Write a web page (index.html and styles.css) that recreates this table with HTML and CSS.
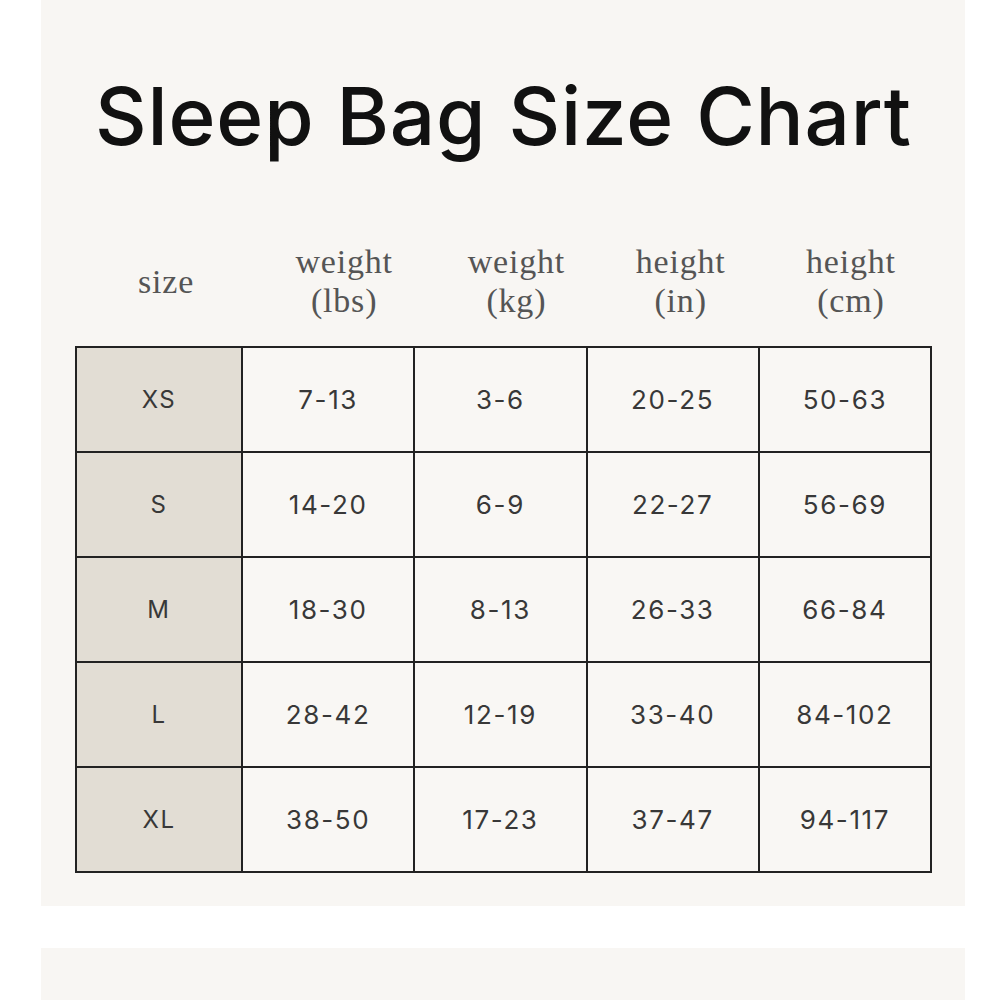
FILE: index.html
```html
<!DOCTYPE html>
<html lang="en">
<head>
<meta charset="utf-8">
<title>Sleep Bag Size Chart</title>
<link rel="stylesheet" href="styles.css">
</head>
<body>
<section class="panel">
  <h1 class="title">Sleep Bag Size Chart</h1>
  <div class="heads">
    <div class="head head-a">size</div>
    <div class="head head-b">weight<br>(lbs)</div>
    <div class="head head-b">weight<br>(kg)</div>
    <div class="head head-a">height<br>(in)</div>
    <div class="head head-c">height<br>(cm)</div>
  </div>
  <table class="chart">
    <tr><td class="size">XS</td><td>7-13</td><td>3-6</td><td>20-25</td><td>50-63</td></tr>
    <tr><td class="size">S</td><td>14-20</td><td>6-9</td><td>22-27</td><td>56-69</td></tr>
    <tr><td class="size">M</td><td>18-30</td><td>8-13</td><td>26-33</td><td>66-84</td></tr>
    <tr><td class="size">L</td><td>28-42</td><td>12-19</td><td>33-40</td><td>84-102</td></tr>
    <tr><td class="size">XL</td><td>38-50</td><td>17-23</td><td>37-47</td><td>94-117</td></tr>
  </table>
</section>
<section class="panel panel-next"></section>
</body>
</html>
```

FILE: styles.css
```css
html, body {
  margin: 0;
  padding: 0;
  background: #ffffff;
}

.panel {
  margin-left: 41px;
  width: 924px;
  height: 906px;
  box-sizing: border-box;
  background: #f8f6f3;
  padding: 76px 33px 0 34px;
}

.panel-next {
  margin-top: 42px;
  height: 60px;
  padding: 0;
}

.title {
  margin: 0;
  font-family: "Inter", "Liberation Sans", sans-serif;
  font-weight: 500;
  font-size: 80px;
  line-height: 80px;
  letter-spacing: 0.8px;
  text-align: center;
  color: #111111;
}

.heads {
  margin-top: 86px;
  display: grid;
  grid-template-columns: 168px repeat(4, 1fr);
  align-items: center;
}

.head {
  font-family: "Liberation Serif", serif;
  font-size: 34px;
  line-height: 39px;
  letter-spacing: 0.8px;
  color: #555555;
  text-align: center;
}

.head-a {
  padding-left: 14px;
}

.head-b {
  padding-left: 30px;
}

.head-c {
  padding-left: 10px;
}

.chart {
  margin-top: 26px;
  width: 857px;
  border-collapse: collapse;
  table-layout: fixed;
  border: 2px solid #222222;
}

.chart td {
  height: 103px;
  padding: 0;
  border: 2px solid #222222;
  text-align: center;
  vertical-align: middle;
  font-family: "Inter", "Liberation Sans", sans-serif;
  font-size: 26px;
  letter-spacing: 1.6px;
  color: #383838;
  background: #f9f7f4;
}

.chart td.size {
  width: 164px;
  background: #e2ddd4;
  font-size: 24px;
}
```
